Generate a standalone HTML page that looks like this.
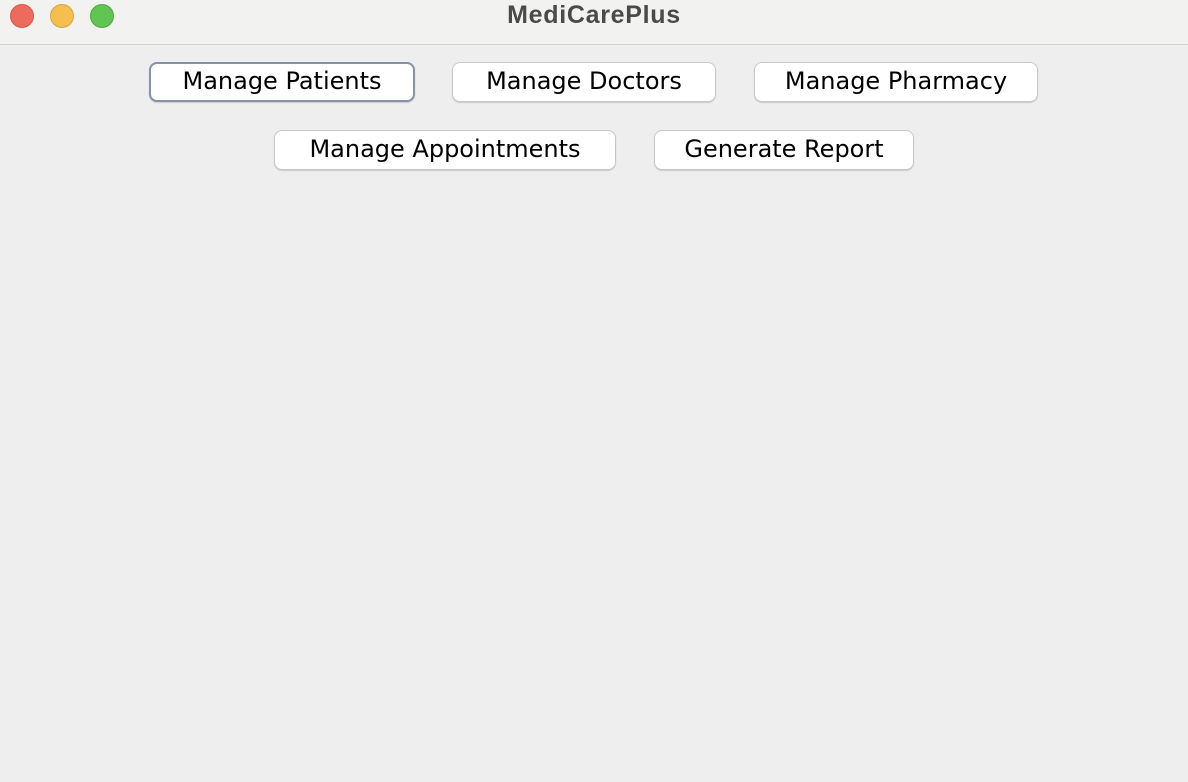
<!DOCTYPE html>
<html><head><style>
body{margin:0;width:1188px;height:782px;background:#eeeeee;position:relative;overflow:hidden;font-family:"DejaVu Sans","Liberation Sans",sans-serif;}
.tb{position:absolute;left:0;top:0;width:1188px;height:44px;background:#f2f2f1;border-bottom:1px solid #d2d2d2;}
.tb .t{position:absolute;left:0;right:0;top:0;line-height:31px;text-align:center;font-size:25px;letter-spacing:0.7px;font-weight:bold;color:#4a4a4a;font-family:"Liberation Sans",sans-serif;}
.d{position:absolute;top:4px;width:24px;height:24px;border-radius:50%;box-sizing:border-box;}
.b{position:absolute;height:40px;box-sizing:border-box;background:#fff;border:1px solid #c8c8c8;border-radius:8px;box-shadow:0 1px 1px rgba(0,0,0,.15);text-align:center;line-height:37px;font-size:24px;color:#000;}
.f{border:2px solid #8592a8;line-height:35px;}
</style></head><body>
<div class="tb"><div class="t">MediCarePlus</div>
<div class="d" style="left:10px;background:#ed6a5e;border:1px solid #d5574c"></div>
<div class="d" style="left:50px;background:#f5bf4f;border:1px solid #d8a23c"></div>
<div class="d" style="left:90px;background:#61c554;border:1px solid #4ea843"></div>
</div>
<div class="b f" style="left:149px;top:62px;width:266px">Manage Patients</div>
<div class="b" style="left:452px;top:62px;width:264px">Manage Doctors</div>
<div class="b" style="left:754px;top:62px;width:284px">Manage Pharmacy</div>
<div class="b" style="left:274px;top:130px;width:342px">Manage Appointments</div>
<div class="b" style="left:654px;top:130px;width:260px">Generate Report</div>
</body></html>
